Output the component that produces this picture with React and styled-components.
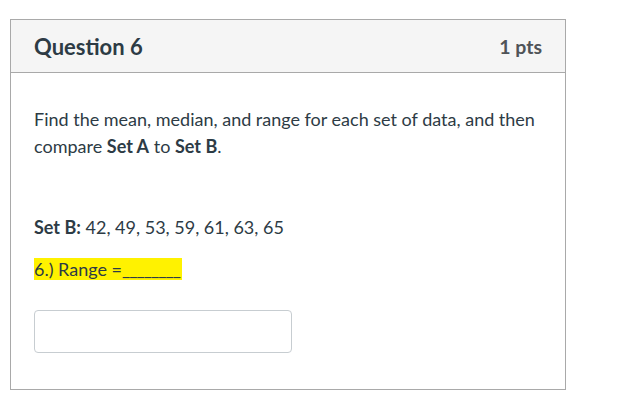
import React from "react";
import styled, { createGlobalStyle } from "styled-components";

const GlobalStyle = createGlobalStyle`
  html, body {
    margin: 0;
    padding: 0;
    background: #fff;
  }
  body {
    font-family: Lato, "Liberation Sans", sans-serif;
    color: #2d3b45;
  }
`;

const Page = styled.div`
  padding: 19px 0 0 10px;
`;

const Card = styled.section`
  width: 556px;
  height: 371px;
  box-sizing: border-box;
  border: 1px solid #a9a9a9;
  display: flex;
  flex-direction: column;
`;

const Header = styled.header`
  height: 52px;
  background: #f5f5f5;
  border-bottom: 1px solid #a9a9a9;
  display: flex;
  align-items: center;
  justify-content: space-between;
  padding: 0 23px;
`;

const Title = styled.h2`
  margin: 0;
  font-size: 22px;
  font-weight: 700;
  color: #2d3b45;
`;

const Points = styled.span`
  font-size: 19.5px;
  font-weight: 700;
  color: #4f5357;
`;

const Body = styled.div`
  padding: 33px 23px 0;
  font-size: 18px;
  line-height: 27px;
`;

const Para = styled.p`
  margin: 0 0 ${(p) => p.$gap || 15}px;
`;

const Mark = styled.span`
  background: #fff200;
  padding-right: 2px;
`;

const Blank = styled.span`
  letter-spacing: -1px;
`;

const Answer = styled.input`
  display: block;
  margin-top: 27px;
  width: 258px;
  height: 43px;
  box-sizing: border-box;
  border: 1px solid #c7cdd1;
  border-radius: 4px;
  background: #fff;
  outline: none;
`;

export default function App() {
  return (
    <>
      <GlobalStyle />
      <Page>
        <Card>
          <Header>
            <Title>Question 6</Title>
            <Points>1 pts</Points>
          </Header>
          <Body>
            <Para $gap={54}>
              Find the mean, median, and range for each set of data, and then
              compare <b>Set A</b> to <b>Set B</b>.
            </Para>
            <Para>
              <b>Set B:</b> 42, 49, 53, 59, 61, 63, 65
            </Para>
            <Para>
              <Mark>
                6.) Range =<Blank>________</Blank>
              </Mark>
            </Para>
            <Answer type="text" />
          </Body>
        </Card>
      </Page>
    </>
  );
}
